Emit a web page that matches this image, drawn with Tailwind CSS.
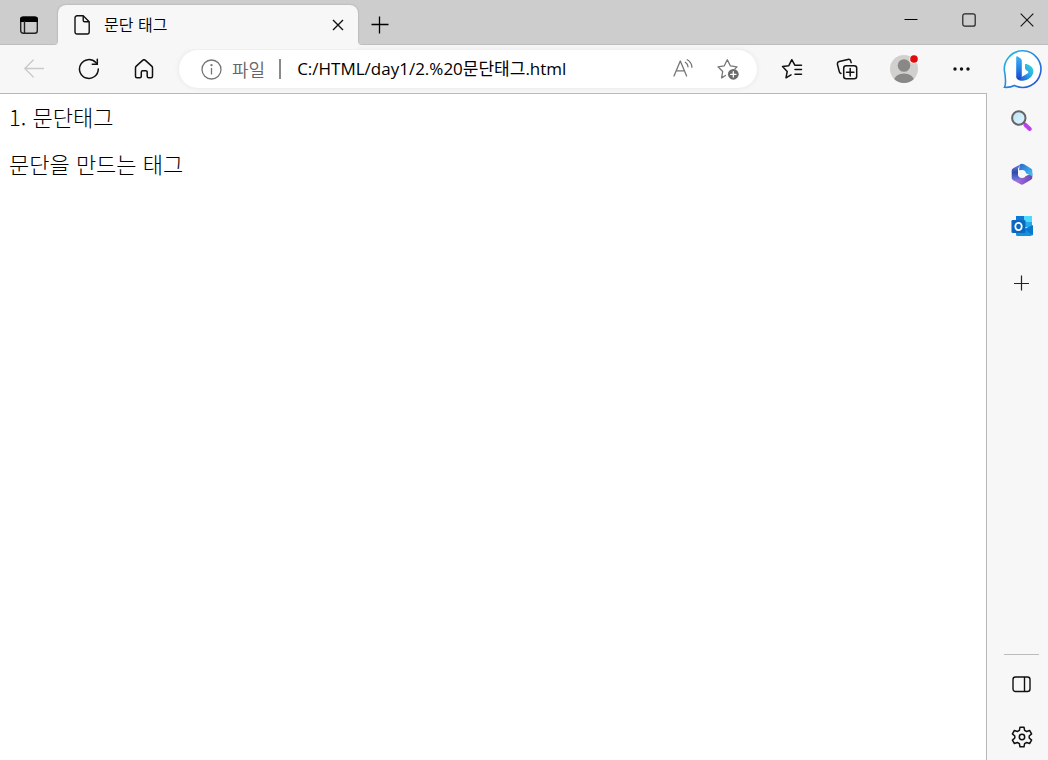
<!DOCTYPE html>
<html lang="ko">
<head>
  <meta charset="UTF-8">
  <meta name="viewport" content="width=device-width, initial-scale=1.0">
  <title>문단 태그</title>
  <script src="https://cdn.jsdelivr.net/npm/@tailwindcss/browser@4"></script>
</head>
<body class="flex h-screen flex-col overflow-hidden bg-[#f7f7f7] font-['Open_Sans','Noto_Sans_CJK_KR',sans-serif] text-black">

  <!-- tab strip -->
  <header class="flex h-[45px] shrink-0 border-b border-[#bdbdbd] bg-[#cdcdcd]">
    <button aria-label="탭 작업 메뉴" class="flex w-[58px] items-center justify-center pt-[6px]">
      <svg class="size-5" viewBox="0 0 20 20" fill="none" stroke="#222" stroke-width="1.4">
        <rect x="1.7" y="2.2" width="16.6" height="16" rx="2.5"/>
        <path d="M1 7V4.500A3 3 0 0 1 4 1.500h12a3 3 0 0 1 3 3V7z" fill="#000" stroke="none"/>
        <path d="M5.500 6v12"/>
      </svg>
    </button>
    <div class="relative -mb-px mt-[5px] flex w-[300px] items-center rounded-t-lg bg-[#f7f7f7] pl-4 pr-2 shadow-[0_0_2px_#999]">
      <div class="absolute inset-x-0 -bottom-1 h-1 bg-[#f7f7f7]"></div>
      <!-- curved feet of the active tab -->
      <svg class="absolute bottom-0 -left-1 size-1" viewBox="0 0 4 4"><path d="M4 0v4H0a4 4 0 0 0 4-4z" fill="#f7f7f7"/></svg>
      <svg class="absolute -right-1 bottom-0 size-1" viewBox="0 0 4 4"><path d="M0 0v4h4a4 4 0 0 1-4-4z" fill="#f7f7f7"/></svg>
      <svg class="h-5 w-4" viewBox="0 0 16 20" fill="none" stroke="#111" stroke-width="1.4" stroke-linejoin="round">
        <path d="M3 .8h6.2l6 5.9V17a2 2 0 0 1-2 2H3a2 2 0 0 1-2-2V2.8a2 2 0 0 1 2-2z"/>
        <path d="M9.2 1v4.2a1.500 1.500 0 0 0 1.500 1.500H15"/>
      </svg>
      <span class="ml-[14px] flex-1 pb-0.5 text-[16px] leading-5 font-[350] font-['Noto_Sans_CJK_KR',sans-serif]">문단 태그</span>
      <button aria-label="탭 닫기" class="flex size-6 items-center justify-center">
        <svg class="size-3" viewBox="0 0 12 12" stroke="#111" stroke-width="1.4"><path d="M1 1l10 10M11 1L1 11"/></svg>
      </button>
    </div>
    <button aria-label="새 탭" class="flex w-11 items-center justify-center pt-[6px]">
      <svg class="size-[18px]" viewBox="0 0 18 18" stroke="#000" stroke-width="1.3"><path d="M8.500 .5v17M.5 8.500h17"/></svg>
    </button>
    <div class="ml-auto flex h-10 gap-4">
      <button aria-label="최소화" class="flex w-[42px] items-center justify-center">
        <svg class="size-[14px]" viewBox="0 0 14 14" stroke="#000"><path d="M.5 6.500h13"/></svg>
      </button>
      <button aria-label="최대화" class="flex w-[42px] items-center justify-center">
        <svg class="size-[14px]" viewBox="0 0 14 14" fill="none" stroke="#222" stroke-width="1.2"><rect x=".8" y=".8" width="12.4" height="12.4" rx="2"/></svg>
      </button>
      <button aria-label="닫기" class="flex w-[42px] items-center justify-center">
        <svg class="size-[14px]" viewBox="0 0 14 14" stroke="#111" stroke-width="1.1"><path d="M.7.7l12.600 12.600M13.300.7L.7 13.300"/></svg>
      </button>
    </div>
  </header>

  <div class="flex min-h-0 flex-1">
    <div class="flex min-w-0 flex-1 flex-col">

      <!-- toolbar -->
      <nav class="flex h-12 shrink-0 items-center pl-[6px]">
        <button aria-label="뒤로" disabled class="flex w-[55px] justify-center">
          <svg class="size-5" viewBox="0 0 20 20" fill="none" stroke="#c9c9c9" stroke-width="1.3" stroke-linecap="round" stroke-linejoin="round"><path d="M19.500 9.500H.8M9.300 1L.8 9.500l8.500 8.500"/></svg>
        </button>
        <button aria-label="새로 고침" class="flex w-[55px] justify-center">
          <svg class="size-[22px]" viewBox="0 0 22 22" fill="none" stroke="#111" stroke-width="1.5" stroke-linecap="round" stroke-linejoin="round"><path d="M20.300 11A9.400 9.400 0 1 1 17.800 4.600L19.300 6.200"/><path d="M19.300 1.300v5h-5"/></svg>
        </button>
        <button aria-label="홈" class="flex w-[55px] justify-center">
          <svg class="size-5" viewBox="0 0 20 20" fill="none" stroke="#111" stroke-width="1.5" stroke-linejoin="round"><path d="M1.500 8.800c0-.7.3-1.200.8-1.700l6.300-5.700a2 2 0 0 1 2.800 0l6.300 5.700c.5.500.8 1 .8 1.700V17.200a1.500 1.500 0 0 1-1.500 1.500h-2.300a1.500 1.500 0 0 1-1.500-1.500v-4a1.500 1.500 0 0 0-1.500-1.500H8.800a1.500 1.500 0 0 0-1.500 1.500v4a1.500 1.500 0 0 1-1.500 1.500H3a1.500 1.500 0 0 1-1.500-1.500z"/></svg>
        </button>

        <div class="mx-2 flex h-[38px] min-w-0 flex-1 items-center rounded-full bg-white pl-[22px] pr-[7px] shadow-[0_0_5px_#e4e4e4]">
          <svg class="size-[21px] shrink-0" viewBox="0 0 21 21" fill="none" stroke="#767676" stroke-width="1.3"><circle cx="10.5" cy="10.5" r="9.5"/><path d="M10.500 9v6.500"/><circle cx="10.5" cy="6.2" r=".5" fill="#767676"/></svg>
          <label for="address" class="ml-[10px] shrink-0 text-[18px] leading-6 font-[350] font-['Noto_Sans_CJK_KR',sans-serif] text-[#666]">파일</label>
          <span class="ml-[14px] h-5 w-0.5 shrink-0 bg-[#8a8a8a]"></span>
          <input id="address" type="text" value="C:/HTML/day1/2.%20문단태그.html" class="ml-4 min-w-0 flex-1 text-[17px] leading-6 outline-none">
          <button aria-label="소리내어 읽기" class="flex w-[45px] justify-center">
            <svg class="size-5" viewBox="0 0 20 20" fill="none" stroke="#767676" stroke-width="1.3" stroke-linecap="round" stroke-linejoin="round"><path d="M1 17L7.300 2 13.600 17M3.300 11.800h8"/><path d="M12.300 3.300c1.700 1 2.600 2.500 2.700 4.500M14.300.7c3 1.700 4.500 4.200 4.600 7.600"/></svg>
          </button>
          <button aria-label="즐겨찾기에 추가" class="flex w-[45px] justify-center">
            <svg class="size-[22px]" viewBox="0 0 22 22" fill="none" stroke="#767676" stroke-width="1.3" stroke-linecap="round" stroke-linejoin="round"><path d="M8.500 17.500L4.600 19.900 5.700 13.500 1 8.800l6.300-1 3-6 3 6 6.700 1-2.200 2.300"/><circle cx="16.3" cy="16.3" r="5.4" fill="#6b6b6b" stroke="none"/><path d="M16.300 13.600v5.400M13.600 16.300H19" stroke="#fff"/></svg>
          </button>
        </div>

        <button aria-label="즐겨찾기" class="flex w-[54px] justify-center">
          <svg class="size-[22px]" viewBox="0 0 22 22" fill="none" stroke="#111" stroke-width="1.5" stroke-linecap="round" stroke-linejoin="round"><path d="M10 16.900L5 19.800 6.200 13.500 1.500 8.600l6.300-.9 3-6 3 5.500M14 7.200h6.500M14 11.500h6.500M14 16.300h6.500"/></svg>
        </button>
        <button aria-label="컬렉션" class="flex w-[55px] justify-center">
          <svg class="size-[22px]" viewBox="0 0 22 22" fill="none" stroke="#111" stroke-width="1.5" stroke-linecap="round" stroke-linejoin="round"><path d="M5 15.500A3 3 0 0 1 3.200 13.300L1.500 6.600a2.500 2.500 0 0 1 1.800-3l8.500-2.200a2.500 2.500 0 0 1 3 1.800l.4 1.400"/><rect x="7.7" y="7.7" width="13" height="13" rx="2.5"/><path d="M14.200 10.500v7.400M10.500 14.200h7.400"/></svg>
        </button>
        <button aria-label="프로필" class="flex w-[60px] justify-center">
          <svg class="size-[30px]" viewBox="0 0 30 30"><defs><clipPath id="face"><circle cx="15" cy="15" r="14"/></clipPath></defs><circle cx="15" cy="15" r="14" fill="#d2d0ce"/><g clip-path="url(#face)" fill="#8a8886"><circle cx="15" cy="11.5" r="6.3"/><ellipse cx="15" cy="27" rx="10.3" ry="7.5"/></g><circle cx="25" cy="5" r="4.6" fill="#f7f7f7"/><circle cx="25" cy="5" r="3.8" fill="#e00b0b"/></svg>
        </button>
        <button aria-label="설정 및 기타" class="flex w-[53px] justify-center">
          <svg class="h-4 w-[18px]" viewBox="0 0 18 16" fill="#111"><circle cx="3" cy="8" r="1.7"/><circle cx="9.5" cy="8" r="1.7"/><circle cx="16" cy="8" r="1.7"/></svg>
        </button>
      </nav>

      <!-- page -->
      <main class="flex-1 border-t border-r border-[#b8b8b8] bg-white px-[9px] pt-[9px] font-['Noto_Sans_CJK_KR',sans-serif] text-[22px] leading-[27px] font-light">
        <p>1. 문단태그</p>
        <p class="mt-5">문단을 만드는 태그</p>
      </main>
    </div>

    <!-- sidebar -->
    <aside class="flex w-[61px] shrink-0 flex-col items-center pl-2">
      <button aria-label="Bing 검색" class="mt-1">
        <svg class="size-[42px]" viewBox="0 0 42 42">
          <defs>
            <linearGradient id="ring" x1="0" y1="0" x2="1" y2="1"><stop stop-color="#27bdea"/><stop offset=".5" stop-color="#2587dc"/><stop offset="1" stop-color="#2947d9"/></linearGradient>
            <linearGradient id="stem" x1="0" y1="0" x2="0" y2="1"><stop stop-color="#39b6f5"/><stop offset=".55" stop-color="#237ee5"/><stop offset="1" stop-color="#1c45ca"/></linearGradient>
            <linearGradient id="bowl" x1="1" y1="0" x2="0" y2="1"><stop stop-color="#3bdcc7"/><stop offset=".4" stop-color="#28aee9"/><stop offset="1" stop-color="#1d45cf"/></linearGradient>
          </defs>
          <path d="M22 1.800a18.300 18.300 0 1 1-8.500 34.700C10.500 38 7 38.600 3.500 38.300 5.400 35 4.400 29 3.900 24.500A18.300 18.300 0 0 1 22 1.800z" fill="#fff" stroke="url(#ring)" stroke-width="1.6"/>
          <path d="M24 16.500c-.4-1.300.4-1.900 1.600-1.500l1.900.7c3.200 1.200 5 3.800 4.900 6.800-.2 5.300-6.200 9.600-11.700 9.300-3.200-.2-5-2-5.300-4.600 1.400 2 4 1.600 6 .4l5-3.100c1.200-.8 1.300-2 .1-2.500l-1-.6c-.8-.4-1.200-1-1.500-1.800z" fill="url(#bowl)"/>
          <path d="M15.200 8.400c0-1 .8-1.300 1.600-.8l2.800 1.900c.8.500 1.200 1.300 1.200 2.300v15.100c0 3-1.800 3.800-3.200 3.600-1.600-.2-2.400-1.600-2.400-3.300z" fill="url(#stem)"/>
        </svg>
      </button>
      <button aria-label="검색" class="mt-[19px]">
        <svg class="size-[22px]" viewBox="0 0 22 22">
          <defs><linearGradient id="lens" x1="0" y1="0" x2="1" y2="1"><stop stop-color="#b7e1f8"/><stop offset="1" stop-color="#e3f5ff"/></linearGradient></defs>
          <path d="M12 12l3 3" stroke="#777" stroke-width="2.5"/>
          <path d="M14.500 15l4.300 4" stroke="#c03cf0" stroke-width="4" stroke-linecap="round"/>
          <circle cx="7.8" cy="8" r="6.7" fill="url(#lens)" stroke="#656565" stroke-width="2"/>
        </svg>
      </button>
      <button aria-label="Microsoft 365" class="mt-[31px]">
        <svg class="size-[22px]" viewBox="0 0 22 22">
          <defs>
            <linearGradient id="m1" x1="0" y1="0" x2="0" y2="1"><stop stop-color="#7d83e2"/><stop offset=".5" stop-color="#2b4bab"/><stop offset="1" stop-color="#7d7be6"/></linearGradient>
            <linearGradient id="m2" x1="0" y1="0" x2="1" y2="1"><stop stop-color="#2867cb"/><stop offset="1" stop-color="#45c4f5"/></linearGradient>
            <linearGradient id="m3" x1="0" y1="0" x2="1" y2="0"><stop stop-color="#bc78df"/><stop offset="1" stop-color="#6546b9"/></linearGradient>
          </defs>
          <path d="M21.300 10v4.600c0 1-.5 1.700-1.300 2.200l-7.200 4.300c-1.200.7-2.500.7-3.700 0L2 17l4-4h9z" fill="url(#m3)"/>
          <path d="M9 1.300c1.200-.9 2.700-.9 4 0l7 4.200c.9.500 1.300 1.200 1.300 2.200v5.500L8 7z" fill="url(#m2)"/>
          <path d="M10 .9L2.200 5.200C1.200 5.700.7 6.500.7 7.600v7.100c0 1 .4 1.800 1.300 2.300l1.500.9L11 15.500 7 12V5.500z" fill="url(#m1)"/>
          <circle cx="11" cy="11" r="4" fill="#f7f7f7"/>
        </svg>
      </button>
      <button aria-label="Outlook" class="mt-[30px]">
        <svg class="size-[22px]" viewBox="0 0 22 22">
          <path d="M5 2a1 1 0 0 1 1-1h14a1 1 0 0 1 1 1v10H5z" fill="#28a8ea"/>
          <path d="M5 1h8v6H5z" fill="#0f78d4"/><path d="M13 1h7a1 1 0 0 1 1 1v5h-8z" fill="#50d9ff"/>
          <path d="M5 11l8 3 8-4v9.500a1.500 1.500 0 0 1-1.500 1.500h-13A1.500 1.500 0 0 1 5 19.500z" fill="#1490df"/>
          <path d="M14 14.500l8-4.500v10.500z" fill="#0a78cc"/>
          <rect x=".5" y="5" width="14" height="13" rx="1.3" fill="#0c68be"/>
          <ellipse cx="7.5" cy="11.5" rx="3.2" ry="3.6" fill="none" stroke="#fff" stroke-width="1.8"/>
        </svg>
      </button>
      <button aria-label="앱 추가" class="mt-[38px]">
        <svg class="size-4" viewBox="0 0 16 16" stroke="#222" stroke-width="1.2"><path d="M7.500 .5v15M0 8.500h15"/></svg>
      </button>
      <div class="mt-auto h-px w-[35px] bg-[#bcbcbc]"></div>
      <button aria-label="사이드바 표시" class="mt-5">
        <svg class="size-5" viewBox="0 0 20 20" fill="none" stroke="#111" stroke-width="1.4"><rect x="1" y="2" width="17" height="14.5" rx="2.5"/><path d="M12.500 2V16.500"/></svg>
      </button>
      <button aria-label="설정" class="mt-[31px] mb-3">
        <svg class="size-[22px]" viewBox="0 0 22 22" fill="none" stroke="#111" stroke-width="1.5" stroke-linejoin="round">
          <path d="M9 1.200h4l.6 3.100 2 1.200 3-1 2 3.400-2.400 2.100v2l2.400 2.100-2 3.400-3-1-2 1.200-.6 3.100H9l-.6-3.100-2-1.200-3 1-2-3.400L3.800 12v-2L1.400 7.900l2-3.400 3 1 2-1.200z"/>
          <circle cx="11" cy="11" r="2.7"/>
        </svg>
      </button>
    </aside>
  </div>
</body>
</html>
